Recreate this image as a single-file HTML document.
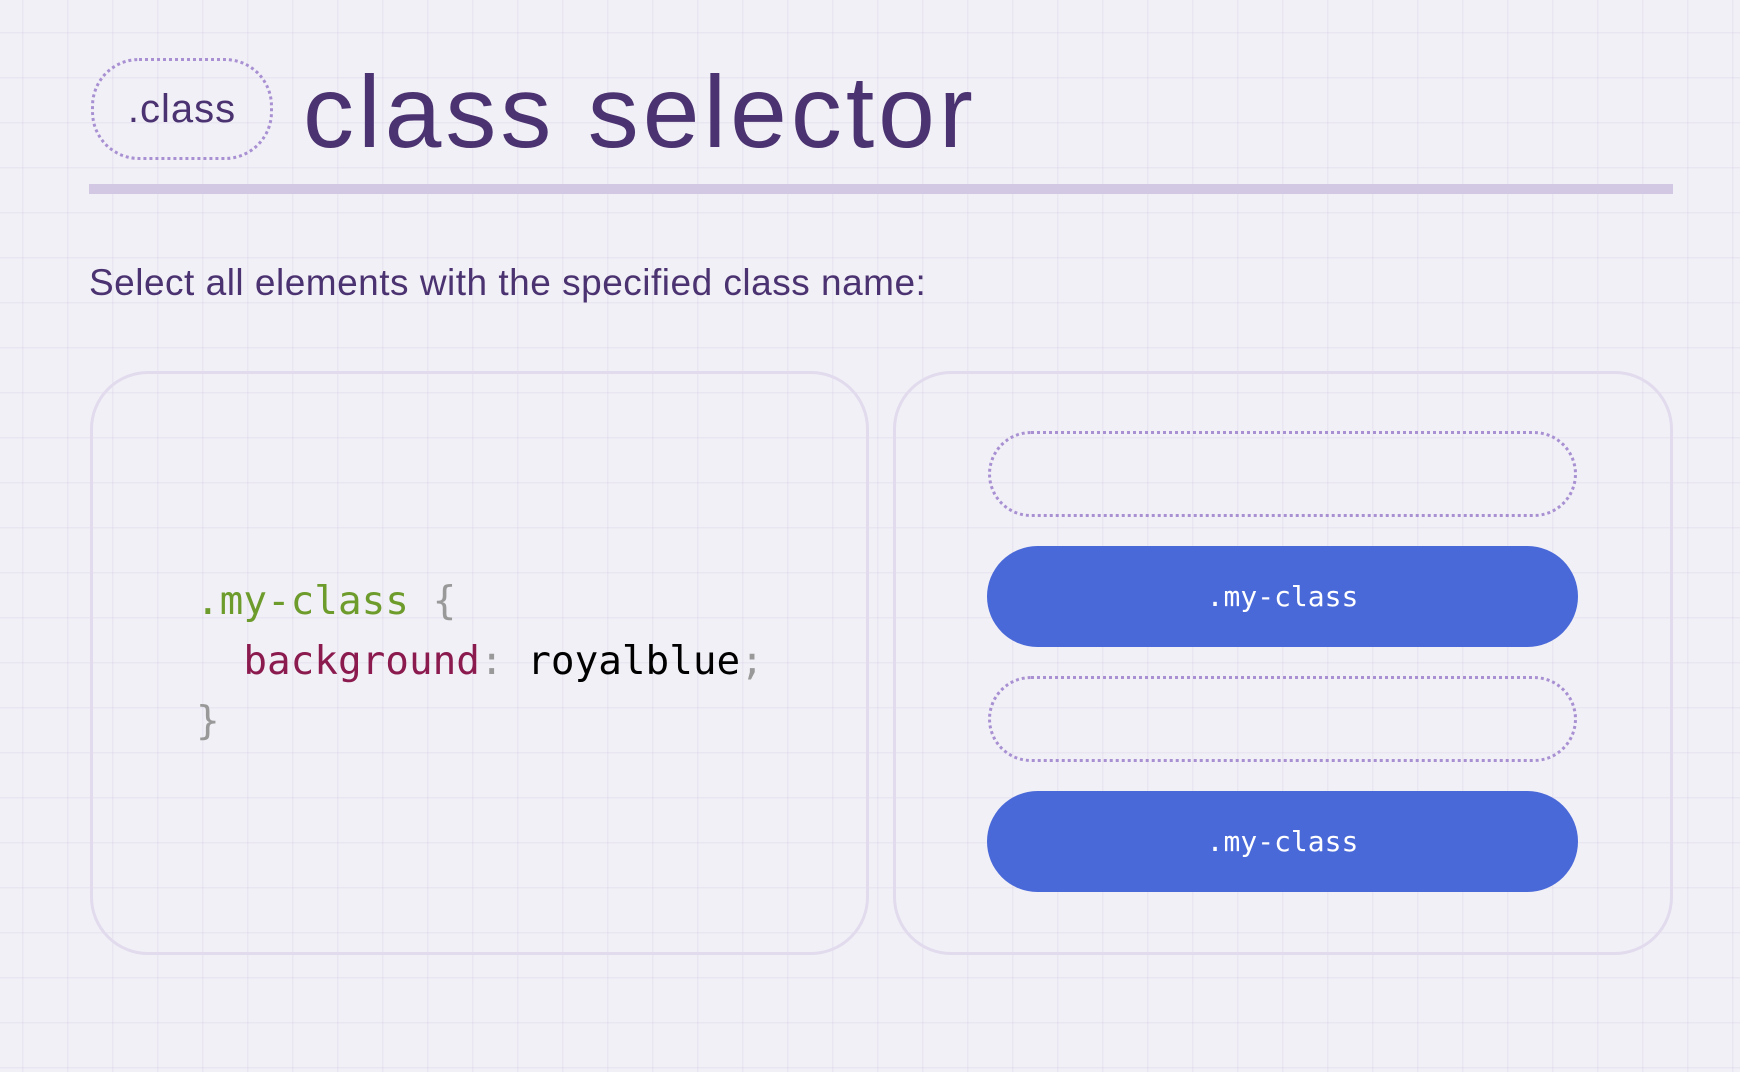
<!DOCTYPE html>
<html><head><meta charset="utf-8"><style>
html,body{margin:0;padding:0}
body{width:1740px;height:1072px;overflow:hidden;position:relative;background-color:#f1f0f6;
background-image:linear-gradient(to right,rgba(200,190,225,.2) 1.5px,transparent 1.5px),linear-gradient(to bottom,rgba(200,190,225,.2) 1.5px,transparent 1.5px);
background-size:45px 45px;background-position:22px 32px;font-family:"Liberation Sans",sans-serif;}
.abs{position:absolute}
.badge{left:91px;top:58px;width:176px;height:96px;border:3.5px dotted #a890d2;border-radius:48px;color:#4b3270;font-size:40px;line-height:96px;text-align:center;letter-spacing:1px}
.title{left:303px;top:52px;font-size:102px;color:#4b3270;line-height:120px;letter-spacing:4px}
.rule{left:89px;top:184px;width:1584px;height:10px;background:#d2c8e4}
.sub{left:89px;top:259px;font-size:37px;color:#4b3270;line-height:48px;letter-spacing:0.5px}
.panel{top:371px;height:584px;border:3.5px solid #e1dbed;border-radius:58px;box-sizing:border-box}
.dot{left:988px;width:589px;height:86px;border:3px dotted #a890d2;border-radius:43px;box-sizing:border-box}
.blue{left:987px;width:591px;height:101px;border-radius:51px;background:#4a69d9;color:#fff;font-family:"DejaVu Sans Mono","Liberation Mono",monospace;font-size:28px;text-align:center;line-height:101px}
.code{left:196px;top:572px;font-family:"DejaVu Sans Mono","Liberation Mono",monospace;font-size:39.3px;line-height:60px;white-space:pre;color:#000}
.g{color:#6e9c2c}.m{color:#8b1a4f}.p{color:#999}
</style></head><body>
<div class="abs badge">.class</div>
<div class="abs title">class selector</div>
<div class="abs rule"></div>
<div class="abs sub">Select all elements with the specified class name:</div>
<div class="abs panel" style="left:90px;width:779px"></div>
<div class="abs panel" style="left:893px;width:780px"></div>
<div class="abs code"><span class="g">.my-class</span> <span class="p">{</span>
  <span class="m">background</span><span class="p">:</span> royalblue<span class="p">;</span>
<span class="p">}</span></div>
<div class="abs dot" style="top:431px"></div>
<div class="abs blue" style="top:546px">.my-class</div>
<div class="abs dot" style="top:676px"></div>
<div class="abs blue" style="top:791px">.my-class</div>
</body></html>
